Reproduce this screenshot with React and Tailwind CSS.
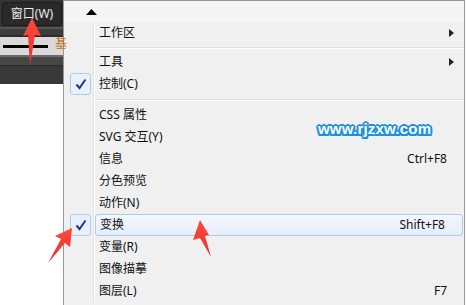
import React from "react";

const font = { fontFamily: '"Noto Sans","Noto Sans CJK SC",sans-serif' };

function Check() {
  return (
    <div className="w-[21px] h-[22px] rounded-[3px] border border-[#aecbef] bg-[#e8f0fb] flex items-center justify-center">
      <svg width="12" height="12" viewBox="0 0 12 12">
        <path d="M1.5 6.5 L4.5 10 L10.5 1.5" fill="none" stroke="#23369a" strokeWidth="2" />
      </svg>
    </div>
  );
}

function SubArrow() {
  return (
    <svg width="5" height="8" viewBox="0 0 5 8" className="mr-[10px]">
      <path d="M0 0 L5 4 L0 8 Z" fill="#222" />
    </svg>
  );
}

function Row({ label, shortcut, sub, checked, hl }) {
  return (
    <div className="flex h-[22px]">
      <div className="w-[29px] flex items-center justify-center pl-[4px]">
        {checked ? <Check /> : null}
      </div>
      <div className="w-[1px] bg-[#e2e2e2]" />
      <div className="w-[1px] bg-[#ffffff]" />
      <div
        className={
          "flex-1 flex items-center justify-between pl-[4px] " +
          (hl ? "rounded-[3px] border border-[#aecbef] bg-gradient-to-b from-[#f3f7fd] to-[#e6eefa] pl-[3px] mr-[1px]" : "")
        }
      >
        <span className="text-[12px] text-[#111] leading-none">{label}</span>
        {shortcut ? <span className="text-[12px] text-[#111] leading-none mr-[17px]">{shortcut}</span> : null}
        {sub ? <SubArrow /> : null}
      </div>
    </div>
  );
}

function Sep({ h }) {
  return (
    <div className={"flex " + h}>
      <div className="w-[29px]" />
      <div className="w-[1px] bg-[#e2e2e2]" />
      <div className="w-[1px] bg-[#ffffff]" />
      <div className="flex-1 flex flex-col justify-center">
        <div className="h-[1px] bg-[#e0e0e0]" />
        <div className="h-[1px] bg-[#ffffff]" />
      </div>
    </div>
  );
}

export default function App() {
  return (
    <div className="relative w-[467px] h-[305px] overflow-hidden bg-white flex" style={font}>
      {/* left dark app area */}
      <div className="w-[63px] flex flex-col">
        <div className="h-[84px] bg-[#3a3a3a] flex flex-col">
          <div className="h-[27px] bg-[#333333] flex items-center pl-[2px]">
            <div className="w-[60px] h-[24px] rounded-[3px] bg-[#2a2a2a] border border-[#1c1c1c] flex items-center justify-center text-[12px] text-[#ececec] leading-none">
              窗口(W)
            </div>
          </div>
          <div className="h-[2px] bg-[#555555]" />
          <div className="h-[6px] bg-[#3c3c3c]" />
          <div className="h-[2px] bg-[#2a2a2a]" />
          <div className="h-[18px] bg-[#d9d9d9] flex items-center relative">
            <div className="ml-[3px] w-[45px] h-[3px] bg-black" />
            <span className="absolute left-[55px] top-[1px] text-[12px] leading-none text-[#c0762a]">基</span>
          </div>
          <div className="h-[2px] bg-[#6a6a6a]" />
          <div className="h-[8px] bg-[#474747]" />
          <div className="h-[1px] bg-[#2a2a2a]" />
          <div className="flex-1 bg-[#383838]" />
        </div>
        <div className="flex-1 bg-white" />
      </div>

      {/* menu */}
      <div className="w-[402px] h-[305px] border-l border-r border-t border-[#979797] bg-[#f0f0f0] flex flex-col">
        <div className="h-[21px] bg-[#f5f5f5] flex items-center">
          <div className="ml-[19px] w-[17px] h-[21px] flex items-center justify-center">
            <svg width="11" height="6" viewBox="0 0 11 6">
              <path d="M0 6 L5.5 0 L11 6 Z" fill="#000" />
            </svg>
          </div>
        </div>
        <Row label="工作区" sub />
        <Sep h="h-[7px]" />
        <Row label="工具" sub />
        <Row label="控制(C)" checked />
        <Sep h="h-[9px]" />
        <Row label="CSS 属性" />
        <Row label="SVG 交互(Y)" />
        <Row label="信息" shortcut="Ctrl+F8" />
        <Row label="分色预览" />
        <Row label="动作(N)" />
        <Row label="变换" shortcut="Shift+F8" checked hl />
        <Row label="变量(R)" />
        <Row label="图像描摹" />
        <Row label="图层(L)" shortcut="F7" />
      </div>
      <div className="flex-1 bg-white" />

      {/* watermark */}
      <div
        className="absolute left-[318px] top-[121px] text-[15px] font-bold text-white leading-none tracking-[0.2px]"
        style={{
          fontFamily: '"Liberation Sans",Arial,sans-serif',
          textShadow:
            "2px 0 0 #1b8fe0,-2px 0 0 #1b8fe0,0 2px 0 #1b8fe0,0 -2px 0 #1b8fe0,1.5px 1.5px 0 #1b8fe0,-1.5px -1.5px 0 #1b8fe0,1.5px -1.5px 0 #1b8fe0,-1.5px 1.5px 0 #1b8fe0",
        }}
      >
        www.rjzxw.com
      </div>

      {/* red arrows */}
      <svg className="absolute left-0 top-0" width="467" height="305" viewBox="0 0 467 305">
        <defs>
          <linearGradient id="rg" x1="0" y1="0" x2="0" y2="1">
            <stop offset="0" stopColor="#ff4a3a" />
            <stop offset="1" stopColor="#e8302c" />
          </linearGradient>
        </defs>
        <polygon points="32,18 41,36 35,35 30,66 28,35 23,36" fill="url(#rg)" />
        <polygon points="72,228 70,247 65,243 48,263 61,239 55,236" fill="url(#rg)" />
        <polygon points="200,220 209,235 205,236 211,257 200,238 193,240" fill="url(#rg)" />
      </svg>
    </div>
  );
}
